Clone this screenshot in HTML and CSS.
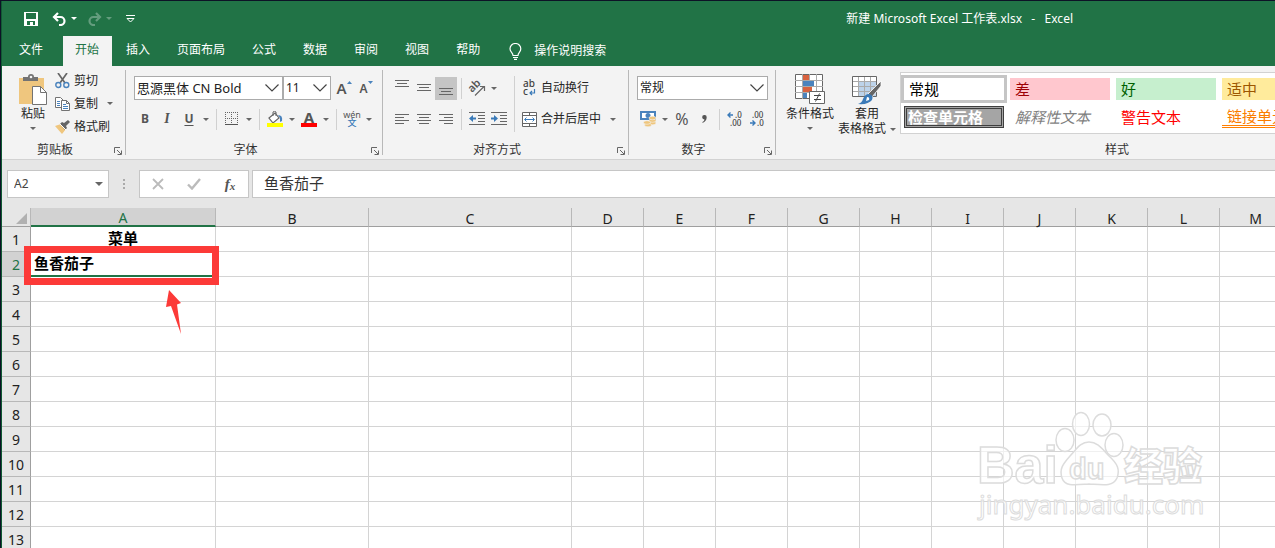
FILE: index.html
```html
<!DOCTYPE html>
<html lang="zh-CN">
<head>
<meta charset="utf-8">
<title>新建 Microsoft Excel 工作表.xlsx - Excel</title>
<link rel="stylesheet" href="styles.css">
</head>
<body>
<div class="app">
  <header class="titlebar">
    <div class="quick">
      <button class="q-btn" aria-label="保存"><svg width="14" height="14" viewBox="0 0 14 14"><path d="M0 0h14v14H0z" fill="#fff"/><path d="M2 1h10v6H2zM3 9h8v4H9v-3H6v3H3z" fill="#217346"/></svg></button>
      <button class="q-btn q-undo" aria-label="撤消"><svg width="15" height="14" viewBox="0 0 15 14"><path d="M6 1L2 5l4 4M2 5h6.500a4 4 0 0 1 0 8H7" fill="none" stroke="#fff" stroke-width="2.200"/></svg><i class="caret"></i></button>
      <button class="q-btn q-redo" aria-label="恢复"><svg width="15" height="14" viewBox="0 0 15 14"><path d="M9 1l4 4-4 4M13 5H6.500a4 4 0 0 0 0 8H8" fill="none" stroke="#fff" stroke-width="2.200"/></svg><i class="caret"></i></button>
      <button class="q-btn q-more" aria-label="自定义快速访问工具栏"><svg width="9" height="8" viewBox="0 0 9 8"><path d="M0 .5h9M1 3.500h7L4.500 7z" fill="none" stroke="#fff"/></svg></button>
    </div>
    <h1 class="title">新建 Microsoft Excel 工作表.xlsx&nbsp;&nbsp; -&nbsp;&nbsp; Excel</h1>
  </header>
  <nav class="tabs">
    <button class="tab tab-file">文件</button>
    <button class="tab active">开始</button>
    <button class="tab">插入</button>
    <button class="tab">页面布局</button>
    <button class="tab">公式</button>
    <button class="tab">数据</button>
    <button class="tab">审阅</button>
    <button class="tab">视图</button>
    <button class="tab">帮助</button>
    <button class="tab tell"><svg width="13" height="17" viewBox="0 0 13 17"><path d="M4 12.500C4 9.500 1 9 1 5.800a5.400 5.300 0 0 1 10.800 0C11.800 9 9 9.500 9 12.500zM4 14.500h5M5 16.300h3" fill="none" stroke="#fff" stroke-width="1.200"/></svg>操作说明搜索</button>
  </nav>

  <section class="ribbon">
    <div class="group g-clip">
      <div class="body">
        <button class="big paste">
          <svg width="30" height="31" viewBox="0 0 30 31"><path d="M1 4h25v26H1z" fill="#efc67e"/><path d="M5 7V3h5a3 3 0 0 1 6 0h4v4z" fill="#737373"/><circle cx="13" cy="3" r="1.300" fill="#f3f3f3"/><path d="M14.500 12.500h8l6 6v12h-14z" fill="#fff" stroke="#737373"/><path d="M22.500 12.500v6h6" fill="none" stroke="#737373"/></svg>
          <span>粘贴</span><i class="caret"></i>
        </button>
        <div class="stack">
          <button class="line"><svg width="15" height="16" viewBox="0 0 15 16"><path d="M3 0l7 10M12 0L5 10" stroke="#666" stroke-width="1.700"/><g fill="none" stroke="#4a83bd" stroke-width="1.400"><circle cx="3.300" cy="12" r="2.500"/><circle cx="11.300" cy="12" r="2.500"/></g></svg>剪切</button>
          <button class="line"><svg width="15" height="14" viewBox="0 0 15 14"><path d="M.5.5h5l3 3v7h-8z" fill="#fff" stroke="#737373"/><path d="M6.500 3.500h5l3 3v7h-8z" fill="#fff" stroke="#737373"/><path d="M11.500 3.500v3h3" fill="none" stroke="#737373"/><path d="M2 4.500h3M2 6.500h3M2 8.500h3M8 7.500h3M8 9.500h5M8 11.500h5" stroke="#4a83bd"/></svg>复制<i class="caret"></i></button>
          <button class="line"><svg width="15" height="14" viewBox="0 0 15 14"><path d="M0 6l6-2 5 5-4 5z" fill="#efc67e"/><path d="M5 4l2-2 2 1 4-3 2 2-4 4 1 2-2 2z" fill="#666"/><path d="M5 4l6 6" stroke="#fff"/></svg>格式刷</button>
        </div>
      </div>
      <footer>剪贴板<svg class="launch" viewBox="0 0 8 8"><path d="M.5 6V.5H6M3 3l4 4M7.500 3.500v4h-4" fill="none" stroke="#666"/></svg></footer>
    </div>

    <div class="group g-font">
      <div class="body col">
        <div class="row">
          <label class="combo family"><select aria-label="字体"><option>思源黑体 CN Bold</option></select><svg viewBox="0 0 14 8"><path d="M.5.5L7 7l6.500-6.500" fill="none" stroke="#444" stroke-width="1.200"/></svg></label>
          <label class="combo size"><select aria-label="字号"><option>11</option></select><svg viewBox="0 0 14 8"><path d="M.5.5L7 7l6.500-6.500" fill="none" stroke="#444" stroke-width="1.200"/></svg></label>
          <button class="tool grow"><span>A</span><svg width="5" height="3" viewBox="0 0 5 3"><path d="M0 3l2.500-3L5 3z" fill="#4a83bd"/></svg></button>
          <button class="tool grow shrink"><span>A</span><svg width="5" height="3" viewBox="0 0 5 3"><path d="M0 0l2.500 3L5 0z" fill="#4a83bd"/></svg></button>
        </div>
        <div class="row">
          <button class="tool bold">B</button><button class="tool ital">I</button><button class="tool und">U</button><button class="drop" aria-label="下划线选项"><i class="caret"></i></button>
          <i class="sep"></i>
          <button class="tool" aria-label="边框"><svg width="14" height="14" viewBox="0 0 14 14"><path d="M.5 0v12M6.500 0v12M12.500 0v12M0 .5h13M0 6.500h13" stroke="#666" stroke-dasharray="1 1"/><path d="M0 12.500h13" stroke="#555"/></svg></button><button class="drop" aria-label="边框选项"><i class="caret"></i></button>
          <i class="sep"></i>
          <button class="tool" aria-label="填充颜色"><svg width="16" height="16" viewBox="0 0 16 16"><path d="M2 7l6-5 4 5-6 5z" fill="#fff" stroke="#666" stroke-width="1.200"/><path d="M6 5V1q1.500-1.500 3 0v4" fill="none" stroke="#666"/><path d="M11 4q5 0 4 6l-2 1V7z" fill="#4a83bd"/><path d="M0 12h16v4H0z" fill="#ff0"/></svg></button><button class="drop" aria-label="填充选项"><i class="caret"></i></button>
          <button class="tool fcolor" aria-label="字体颜色"><span>A</span></button><button class="drop" aria-label="字体颜色选项"><i class="caret"></i></button>
          <i class="sep"></i>
          <button class="tool wen"><span>wén</span><b>文</b></button><button class="drop" aria-label="拼音选项"><i class="caret"></i></button>
        </div>
      </div>
      <footer>字体<svg class="launch" viewBox="0 0 8 8"><path d="M.5 6V.5H6M3 3l4 4M7.500 3.500v4h-4" fill="none" stroke="#666"/></svg></footer>
    </div>

    <div class="group g-align">
      <div class="body">
        <div class="pair">
          <div class="row">
            <button class="tool" aria-label="顶端对齐"><svg width="14" height="16" viewBox="0 0 14 16"><path d="M0 .5h14M2 3.500h10M0 6.500h14" stroke="#666"/></svg></button>
            <button class="tool" aria-label="垂直居中"><svg width="14" height="16" viewBox="0 0 14 16"><path d="M0 4.500h14M2 7.500h10M0 10.500h14" stroke="#666"/></svg></button>
            <button class="tool on" aria-label="底端对齐"><svg width="14" height="16" viewBox="0 0 14 16"><path d="M0 8.500h14M2 11.500h10M0 14.500h14" stroke="#666"/></svg></button>
            <i class="sep"></i>
            <button class="tool" aria-label="方向"><svg width="18" height="18" viewBox="0 0 18 18"><text x="4" y="14" transform="rotate(-45 4 14)" class="t-rot">ab</text><path d="M7 16.500l9-9M12 7.500h4.500V12" fill="none" stroke="#666" stroke-width="1.200"/></svg></button><button class="drop" aria-label="方向选项"><i class="caret"></i></button>
          </div>
          <div class="row">
            <button class="tool" aria-label="左对齐"><svg width="14" height="12" viewBox="0 0 14 12"><path d="M0 1.500h14M0 4.500h9M0 7.500h14M0 10.500h9" stroke="#666"/></svg></button>
            <button class="tool" aria-label="居中"><svg width="14" height="12" viewBox="0 0 14 12"><path d="M0 1.500h14M2 4.500h10M0 7.500h14M2 10.500h10" stroke="#666"/></svg></button>
            <button class="tool" aria-label="右对齐"><svg width="14" height="12" viewBox="0 0 14 12"><path d="M0 1.500h14M5 4.500h9M0 7.500h14M5 10.500h9" stroke="#666"/></svg></button>
            <i class="sep"></i>
            <button class="tool" aria-label="减少缩进"><svg width="16" height="14" viewBox="0 0 16 14"><path d="M0 .5h16M9 3.500h7M9 6.500h7M9 9.500h7M0 12.500h16" stroke="#666"/><path d="M0 6.500L4 3v2.500h3v2H4V10z" fill="#3a7ab8"/></svg></button>
            <button class="tool" aria-label="增加缩进"><svg width="16" height="14" viewBox="0 0 16 14"><path d="M0 .5h16M9 3.500h7M9 6.500h7M9 9.500h7M0 12.500h16" stroke="#666"/><path d="M7 6.500L3 3v2.500H0v2h3V10z" fill="#3a7ab8"/></svg></button>
          </div>
        </div>
        <i class="sep tall"></i>
        <div class="pair texts">
          <button class="line wide"><svg width="15" height="18" viewBox="0 0 15 18"><text x="1" y="8" class="t-ab">ab</text><text x="1" y="16" class="t-ab">c</text><path d="M12.500 10v4H8M10 12l-2 2 2 2" fill="none" stroke="#3a7ab8" stroke-width="1.200"/></svg>自动换行</button>
          <button class="line wide"><svg width="15" height="15" viewBox="0 0 15 15"><path d="M.5.5h14v14H.5zM0 3.500h15M0 11.500h15M7.500 0v3M7.500 12v3" fill="#fff" stroke="#666"/><path d="M3 7.500h9M4.500 5.500l-2 2 2 2M10.500 5.500l2 2-2 2" fill="none" stroke="#3a7ab8"/></svg>合并后居中<i class="caret"></i></button>
        </div>
      </div>
      <footer>对齐方式<svg class="launch" viewBox="0 0 8 8"><path d="M.5 6V.5H6M3 3l4 4M7.500 3.500v4h-4" fill="none" stroke="#666"/></svg></footer>
    </div>

    <div class="group g-num">
      <div class="body col">
        <div class="row"><label class="combo fmt"><select aria-label="数字格式"><option>常规</option></select><svg viewBox="0 0 14 8"><path d="M.5.5L7 7l6.500-6.500" fill="none" stroke="#444" stroke-width="1.200"/></svg></label></div>
        <div class="row">
          <button class="tool" aria-label="会计数字格式"><svg width="16" height="16" viewBox="0 0 16 16"><path d="M0 0h16v9H0z" fill="#4a83bd"/><path d="M2 2h12v5H2z" fill="#fff"/><circle cx="8" cy="4.500" r="2.500" fill="#4a83bd"/><g fill="#efc67e" stroke="#f3f3f3" stroke-width=".6"><ellipse cx="12.500" cy="12" rx="3.500" ry="1.800"/><ellipse cx="12.500" cy="9.500" rx="3.500" ry="1.800"/><ellipse cx="12.500" cy="7" rx="3.500" ry="1.800"/><ellipse cx="8" cy="14" rx="3.500" ry="1.800"/><ellipse cx="7" cy="11.500" rx="3.500" ry="1.800"/></g></svg></button><button class="drop" aria-label="会计格式选项"><i class="caret"></i></button>
          <button class="tool pct">%</button><button class="tool comma" aria-label="千位分隔样式"><svg width="5" height="8" viewBox="0 0 5 8"><path d="M2.300 0a2.300 2.300 0 0 1 2.400 2.300C4.700 5 3 7 .5 8V7q1.800-1 2-2.500A2.200 2.200 0 0 1 2.300 0z" fill="#555"/></svg></button>
          <i class="sep"></i>
          <button class="tool" aria-label="增加小数位数"><svg width="16" height="16" viewBox="0 0 16 16"><text x="8" y="7" class="t-dec">.0</text><text x="3" y="15" class="t-dec">.00</text><path d="M6 4H1M3.500 1.500L1 4l2.500 2.500" fill="none" stroke="#3a7ab8" stroke-width="1.400"/></svg></button>
          <button class="tool" aria-label="减少小数位数"><svg width="16" height="16" viewBox="0 0 16 16"><text x="3" y="7" class="t-dec">.00</text><text x="8" y="15" class="t-dec">.0</text><path d="M1 12h5M3.500 9.500L6 12l-2.500 2.500" fill="none" stroke="#3a7ab8" stroke-width="1.400"/></svg></button>
        </div>
      </div>
      <footer>数字<svg class="launch" viewBox="0 0 8 8"><path d="M.5 6V.5H6M3 3l4 4M7.500 3.500v4h-4" fill="none" stroke="#666"/></svg></footer>
    </div>

    <div class="group g-style">
      <div class="body">
        <button class="big">
          <svg width="30" height="31" viewBox="0 0 30 31"><path d="M.5.5h27v24H.5z" fill="#fff" stroke="#666"/><path d="M0 6.500h28M0 12.500h28M0 18.500h28M7.500 0v25M14.500 0v25M21.500 0v25" stroke="#aaa"/><path d="M8 1h6v5H8zM8 13h9v5H8z" fill="#d8623f"/><path d="M8 7h11v5H8zM8 19h4v5H8z" fill="#4a83bd"/><path d="M14.500 17.500h15v12h-15z" fill="#fff" stroke="#666"/><path d="M19 21.500h7M19 25.500h7M24.500 19.500l-4 8" stroke="#444"/></svg>
          <span>条件格式</span><i class="caret"></i>
        </button>
        <button class="big big-table">
          <svg width="30" height="31" viewBox="0 0 30 31"><path d="M.5 2.500h24v20H.5z" fill="#fff" stroke="#666"/><path d="M7 7h17v15H7z" fill="#bdd3ea"/><path d="M1 7.500h23M1 12.500h23M1 17.500h23M6.500 3v19M12.500 3v19M18.500 3v19" stroke="#aaa"/><path d="M29 7v5L20 23l-4-3z" fill="#666" stroke="#fff" stroke-width=".8"/><path d="M17 20q5 1 3 6-4 5-14 4 4-1 5-5 2-5 6-5z" fill="#3a7ab8"/><path d="M15 23q3 0 2 3l-3 1z" fill="#fff"/></svg>
          <span>套用<br>表格格式<i class="caret"></i></span>
        </button>
        <div class="gallery">
          <button class="st st-normal">常规</button><button class="st st-bad">差</button><button class="st st-good">好</button><button class="st st-neutral">适中</button>
          <button class="st st-check">检查单元格</button><button class="st st-expl">解释性文本</button><button class="st st-warn">警告文本</button><button class="st st-link">链接单元格</button>
        </div>
      </div>
      <footer>样式</footer>
    </div>
  </section>

  <section class="formula">
    <label class="namebox"><input aria-label="名称框" value="A2"><i class="caret"></i></label>
    <span class="dots"><i></i><i></i><i></i></span>
    <div class="fx">
      <button aria-label="取消"><svg width="12" height="12" viewBox="0 0 12 12"><path d="M1 1l10 10M11 1L1 11" stroke="#bbb" stroke-width="1.800"/></svg></button>
      <button aria-label="输入"><svg width="14" height="12" viewBox="0 0 14 12"><path d="M1 6.500L5 10.500 13 1" fill="none" stroke="#bbb" stroke-width="2.400"/></svg></button>
      <button class="fn" aria-label="插入函数">f<small>x</small></button>
    </div>
    <input class="content" aria-label="编辑栏" value="鱼香茄子">
  </section>

  <main class="sheet">
    <table>
      <colgroup><col class="c-head"><col class="c-a"><col class="c-b"><col class="c-c"><col span="10" class="c-n"></colgroup>
      <thead><tr><th class="corner"><svg width="11" height="11" viewBox="0 0 11 11"><path d="M11 0v11H0z" fill="#b1b1b1"/></svg></th><th class="sel">A</th><th>B</th><th>C</th><th>D</th><th>E</th><th>F</th><th>G</th><th>H</th><th>I</th><th>J</th><th>K</th><th>L</th><th>M</th></tr></thead>
      <tbody>
        <tr><th>1</th><td class="center">菜单</td><td></td><td></td><td></td><td></td><td></td><td></td><td></td><td></td><td></td><td></td><td></td><td></td></tr>
        <tr><th class="sel">2</th><td class="cur">鱼香茄子</td><td></td><td></td><td></td><td></td><td></td><td></td><td></td><td></td><td></td><td></td><td></td><td></td></tr>
        <tr><th>3</th><td></td><td></td><td></td><td></td><td></td><td></td><td></td><td></td><td></td><td></td><td></td><td></td><td></td></tr>
        <tr><th>4</th><td></td><td></td><td></td><td></td><td></td><td></td><td></td><td></td><td></td><td></td><td></td><td></td><td></td></tr>
        <tr><th>5</th><td></td><td></td><td></td><td></td><td></td><td></td><td></td><td></td><td></td><td></td><td></td><td></td><td></td></tr>
        <tr><th>6</th><td></td><td></td><td></td><td></td><td></td><td></td><td></td><td></td><td></td><td></td><td></td><td></td><td></td></tr>
        <tr><th>7</th><td></td><td></td><td></td><td></td><td></td><td></td><td></td><td></td><td></td><td></td><td></td><td></td><td></td></tr>
        <tr><th>8</th><td></td><td></td><td></td><td></td><td></td><td></td><td></td><td></td><td></td><td></td><td></td><td></td><td></td></tr>
        <tr><th>9</th><td></td><td></td><td></td><td></td><td></td><td></td><td></td><td></td><td></td><td></td><td></td><td></td><td></td></tr>
        <tr><th>10</th><td></td><td></td><td></td><td></td><td></td><td></td><td></td><td></td><td></td><td></td><td></td><td></td><td></td></tr>
        <tr><th>11</th><td></td><td></td><td></td><td></td><td></td><td></td><td></td><td></td><td></td><td></td><td></td><td></td><td></td></tr>
        <tr><th>12</th><td></td><td></td><td></td><td></td><td></td><td></td><td></td><td></td><td></td><td></td><td></td><td></td><td></td></tr>
        <tr><th>13</th><td></td><td></td><td></td><td></td><td></td><td></td><td></td><td></td><td></td><td></td><td></td><td></td><td></td></tr>
      </tbody>
    </table>
    <div class="mark"></div>
    <svg class="arrow" width="18" height="46" viewBox="0 0 18 46"><path d="M4 1l12 13-4 1.500L16 45 6 17l-5 1z" fill="#fc3a38"/></svg>
    <svg class="watermark" width="252" height="116" viewBox="0 0 252 116">
      <g class="wm">
        <ellipse cx="105" cy="29" rx="9" ry="11.500"/><ellipse cx="121" cy="13" rx="8.500" ry="11.500"/><ellipse cx="142" cy="14" rx="9" ry="11"/><ellipse cx="154" cy="34" rx="9" ry="11.500"/>
        <path d="M129 31c9 0 14 8 20 14 9 8 11 14 8 22-4 9-14 7-28 6-14 1-24 3-27-6-3-9 1-14 8-22 6-6 10-14 19-14z"/>
        <text x="17" y="72" class="w-bai">Bai</text>
        <text x="109" y="68" class="w-du">du</text>
        <text x="164" y="69" class="w-exp">经验</text>
        <text x="19" y="103" class="w-url">jingyan.baidu.com</text>
      </g>
    </svg>
  </main>
</div>
</body>
</html>
```

FILE: styles.css
```css
* { box-sizing: border-box; }
html, body { height: 100%; }
body {
  margin: 0;
  overflow: hidden;
  background: #e6e6e6;
  color: #262626;
  font: 12px/16px "Noto Sans", "Noto Sans CJK SC", sans-serif;
}
button, input, select {
  margin: 0;
  padding: 0;
  border: 0;
  background: none;
  color: inherit;
  font: inherit;
}
svg { display: block; flex: none; }
.app {
  display: flex;
  flex-direction: column;
  height: 100%;
  border-top: 1px solid #0d1226;
  border-left: 1px solid #0d1226;
  box-shadow: inset 1px 0 #0f5a33;
  padding-left: 1px;
  overflow: hidden;
}
.caret {
  flex: none;
  display: inline-block;
  border: 3px solid transparent;
  border-top-color: #666;
  border-bottom: 0;
}

/* Title bar */
.titlebar {
  position: relative;
  display: flex;
  flex: none;
  align-items: center;
  height: 35px;
  background: #217346;
  color: #fff;
}
.quick { display: flex; align-items: center; padding-left: 22px; }
.q-btn { display: flex; align-items: center; gap: 4px; }
.q-btn .caret { border-top-color: #fff; }
.q-undo { margin-left: 14px; }
.q-redo { margin-left: 10px; opacity: 0.3; }
.q-more { margin-left: 14px; }
.title { margin: 0 0 0 auto; padding-right: 202px; font-size: 12px; font-weight: 400; white-space: nowrap; }

/* Tabs */
.tabs { display: flex; flex: none; gap: 2px; height: 30px; background: #217346; color: #fff; }
.tab { padding: 0 13px 2px 12px; white-space: nowrap; }
.tab-file { padding: 0 18px 2px 17px; }
.tab.active { background: #f3f3f3; color: #217346; }
.tell { display: flex; align-items: center; gap: 12px; padding: 0 14px; }

/* Ribbon */
.ribbon { display: flex; flex: none; height: 94px; background: #f3f3f3; border-bottom: 1px solid #d2d2d2; overflow: hidden; }
.group { position: relative; display: flex; flex: none; flex-direction: column; }
.group::after {
  content: "";
  position: absolute;
  top: 4px;
  right: 0;
  bottom: 4px;
  border-right: 1px solid #b8b8b8;
}
.body { display: flex; flex: 1; }
.body.col { flex-direction: column; gap: 7px; }
.group footer { display: flex; flex: none; justify-content: center; height: 17px; color: #333; }
.launch { position: absolute; right: 4px; bottom: 4px; width: 8px; height: 8px; }
.row { display: flex; align-items: center; height: 24px; }
.tool { display: flex; flex: none; align-items: center; justify-content: center; width: 22px; height: 23px; color: #555; }
.tool.on { background: #c5c5c5; }
.drop { display: flex; align-items: center; justify-content: center; width: 12px; height: 22px; }
.sep { flex: none; width: 1px; height: 21px; margin: 0 4px; background: #d0d0d0; }
.line { display: flex; align-items: center; gap: 4px; height: 23px; white-space: nowrap; }
.line .caret { margin-left: 5px; }
.big { display: flex; flex-direction: column; align-items: center; gap: 1px; }
.big span { white-space: nowrap; line-height: 15px; }
.big > .caret { margin-top: 5px; }

.g-clip { width: 124px; }
.g-clip .body { padding: 3px 0 0 16px; }
.paste { padding-top: 5px; }
.stack { padding-left: 7px; }
.g-clip footer { padding-right: 18px; }

.g-font { width: 257px; }
.g-font .body { padding: 10px 0 0 8px; }
.g-font footer { padding-right: 18px; }
.combo { position: relative; display: block; height: 24px; border: 1px solid #ababab; background: #fff; }
.combo select { display: block; width: 100%; height: 100%; padding-left: 2px; appearance: none; color: #222; }
.combo svg { position: absolute; top: 7px; right: 3px; width: 14px; height: 8px; pointer-events: none; }
.family { width: 149px; font-size: 13px; }
.size { width: 48px; }
.grow { align-items: flex-start; margin-left: 2px; font-size: 15px; font-weight: 600; line-height: 23px; }
.shrink { margin-left: 0; font-size: 12px; }
.grow svg { margin-top: 4px; }
.bold { font-weight: 700; }
.ital { font-family: "Liberation Serif", serif; font-size: 14px; font-style: italic; font-weight: 700; }
.und { font-weight: 700; text-decoration: underline; text-underline-offset: 2px; }
.fcolor { font-size: 15px; font-weight: 700; }
.fcolor span { width: 16px; height: 16px; border-bottom: 4px solid #f00; line-height: 12px; }
.wen { flex-direction: column; font-size: 9px; line-height: 8px; }
.wen b { color: #3a7ab8; font-weight: 500; }

.g-align { width: 246px; }
.g-align .body { padding: 10px 0 0 8px; }
.pair { display: flex; flex-direction: column; gap: 7px; }
.sep.tall { height: 56px; margin-left: 6px; }
.g-align .pair:first-child { width: 117px; }
.texts .line { height: 24px; padding-left: 3px; }
.g-align footer { padding-right: 18px; }
.t-rot { font: 600 11px "Noto Sans", sans-serif; fill: #555; }
.t-ab { font: 500 10px "Noto Sans", sans-serif; fill: #444; }
.t-dec { font: 500 8px "Noto Sans", sans-serif; fill: #444; }

.g-num { width: 147px; }
.g-num .body { padding: 10px 0 0 8px; }
.fmt { width: 131px; font-size: 12px; }
.pct { font-size: 16px; }
.g-num footer { padding-right: 18px; }

.g-style { width: 682px; }
.g-style .body { padding: 6px 0 0 10px; }
.g-style .big { padding-top: 2px; }
.g-style .big-table { margin-left: 4px; }
.big-table .caret { margin: 0 0 2px 4px; }
.gallery {
  display: grid;
  flex: 1;
  grid-template-columns: repeat(5, 100px);
  grid-template-rows: 22px 22px;
  gap: 6px;
  align-self: flex-start;
  height: 62px;
  margin-left: 4px;
  padding: 5px 3px;
  border: 1px solid #d2d2d2;
  background: #fff;
  overflow: hidden;
}
.st { padding-left: 5px; text-align: left; font-size: 15px; line-height: 20px; white-space: nowrap; overflow: hidden; }
.st-normal { box-shadow: 0 0 0 3px #c5c5c5; color: #000; }
.st-bad { background: #ffc7ce; color: #9c0006; }
.st-good { background: #c6efce; color: #006100; }
.st-neutral { background: #ffeb9c; color: #9c5700; }
.st-check { grid-column: 1; padding-left: 1px; border: 3px double #3f3f3f; background: #a5a5a5; color: #fff; font-weight: 700; line-height: 14px; }
.st-expl { color: #7f7f7f; font-style: italic; }
.st-warn { color: #f00; }
.st-link { border-bottom: 3px double #ff8001; color: #fa7d00; }

/* Formula bar */
.formula { display: flex; flex: none; align-items: center; height: 48px; padding-left: 5px; background: #e6e6e6; }
.namebox, .fx, .content { height: 28px; border: 1px solid #c6c6c6; background: #fff; }
.namebox { display: flex; align-items: center; width: 102px; padding: 0 5px 0 6px; color: #444; }
.namebox input { flex: 1; min-width: 0; }
.namebox .caret { border-width: 4px 4px 0; }
.dots { display: flex; flex-direction: column; gap: 2px; width: 30px; align-items: center; }
.dots i { width: 2px; height: 2px; background: #aaa; }
.fx { display: flex; align-items: center; width: 110px; }
.fx button { display: flex; flex: 1; align-items: center; justify-content: center; }
.fn { color: #555; font: italic 700 15px/20px "Liberation Serif", serif; }
.fn small { padding-top: 4px; font-size: 11px; }
.content { flex: 1; min-width: 0; margin-left: 3px; padding: 0 0 4px 11px; border-right: 0; font-size: 15px; color: #333; }

/* Worksheet */
.sheet { position: relative; flex: 1; min-height: 0; overflow: hidden; background: #fff; }
table { width: 1290px; border-collapse: separate; border-spacing: 0; table-layout: fixed; }
.c-head { width: 29px; }
.c-a { width: 185px; }
.c-b { width: 153px; }
.c-c { width: 203px; }
.c-n { width: 72px; }
th, td { height: 25px; padding: 0; border: solid #d4d4d4; border-width: 0 1px 1px 0; line-height: 20px; }
th { background: #e6e6e6; color: #222; font-size: 14px; font-weight: 400; }
tbody th { padding-top: 2px; border-right-color: #9f9f9f; border-bottom-color: #b8b8b8; }
thead th { height: 19px; padding-top: 2px; border-bottom-color: #9f9f9f; border-right-color: #b8b8b8; line-height: 15px; }
th.sel { background: #d2d2d2; color: #217346; }
thead th.sel { border-bottom: 2px solid #217346; }
.corner svg { margin-left: 14px; }
td { padding-bottom: 2px; color: #000; font-size: 15px; font-weight: 700; }
td.center { text-align: center; }
td.cur { padding-left: 3px; border-bottom: 2px solid #217346; }
.mark { position: absolute; top: 38px; left: 22px; width: 195px; height: 39px; border: 7px solid #fc3a38; }
.arrow { position: absolute; top: 81px; left: 163px; }
.watermark { position: absolute; top: 203px; left: 958px; }
.wm { fill: #fff; fill-opacity: 0.65; stroke: #dcdcdc; stroke-width: 1.5px; }
.w-bai { font: 700 52px "Liberation Sans", sans-serif; }
.w-du { font: 700 29px "Liberation Sans", sans-serif; }
.w-exp { font: 900 39px "Noto Sans CJK SC", sans-serif; }
.w-url { font: 400 26px "Noto Sans", sans-serif; stroke-width: 1px; }
```
